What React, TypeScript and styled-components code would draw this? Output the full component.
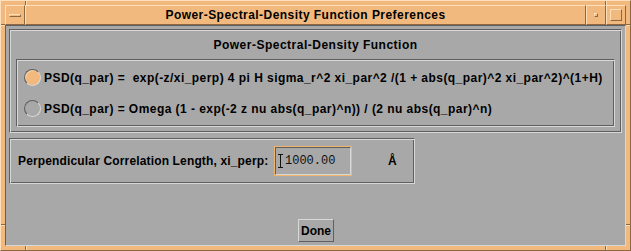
import React from "react";
import styled, { createGlobalStyle } from "styled-components";

const ORANGE = "#f2b97f";
const ORANGE_LIGHT = "#fde0bb";
const ORANGE_DARK = "#8c673f";
const GRAY = "#a8a8a8";
const GRAY_LIGHT = "#d8d8d8";
const GRAY_DARK = "#5f5f5f";
const FOCUS = "#f0b46c";

const Global = createGlobalStyle`
  html, body { margin: 0; padding: 0; background: ${GRAY}; }
  body { font-family: "Liberation Sans", Arial, sans-serif; }
`;

const Window = styled.div`
  position: relative;
  box-sizing: border-box;
  width: 631px;
  height: 251px;
  background: ${ORANGE};
  border: 1px solid;
  border-color: ${ORANGE_LIGHT} ${ORANGE_DARK} ${ORANGE_DARK} ${ORANGE_LIGHT};
  padding: 4px;
  display: flex;
  flex-direction: column;
`;

const Tick = styled.div<{ $v?: boolean }>`
  position: absolute;
  ${(p) =>
    p.$v
      ? `width: 2px; height: 4px; border-left: 1px solid ${ORANGE_DARK}; background: ${ORANGE_LIGHT}; box-sizing: border-box;`
      : `height: 2px; width: 4px; border-top: 1px solid ${ORANGE_DARK}; background: ${ORANGE_LIGHT}; box-sizing: border-box;`}
`;

const TitleBar = styled.div`
  display: flex;
  height: 20px;
  flex: none;
`;

const TitleButton = styled.div<{ $w?: number }>`
  box-sizing: border-box;
  width: ${(p) => (p.$w ? `${p.$w}px` : "auto")};
  flex: ${(p) => (p.$w ? "none" : "1")};
  height: 20px;
  border: 1px solid;
  border-color: ${ORANGE_LIGHT} ${ORANGE_DARK} ${ORANGE_DARK} ${ORANGE_LIGHT};
  display: flex;
  align-items: center;
  justify-content: center;
`;

const Title = styled.span`
  font: bold 12px "Liberation Sans", Arial, sans-serif;
  letter-spacing: 0.45px;
  color: #000;
  line-height: 18px;
  white-space: pre;
`;

const Knob = styled.div<{ $w: number; $h: number }>`
  box-sizing: border-box;
  width: ${(p) => p.$w}px;
  height: ${(p) => p.$h}px;
  border: 1px solid;
  border-color: ${ORANGE_LIGHT} ${ORANGE_DARK} ${ORANGE_DARK} ${ORANGE_LIGHT};
`;

const Content = styled.div`
  flex: 1;
  box-sizing: border-box;
  background: ${GRAY};
  border: 1px solid;
  border-color: ${GRAY_DARK} ${GRAY_LIGHT} ${GRAY_LIGHT} ${GRAY_DARK};
  padding: 3px 2px 3px 3px;
  display: flex;
  flex-direction: column;
  align-items: flex-start;
`;

const Etched = styled.div`
  box-sizing: border-box;
  border: 1px solid;
  border-color: ${GRAY_DARK} ${GRAY_LIGHT} ${GRAY_LIGHT} ${GRAY_DARK};
  box-shadow: inset 1px 1px 0 ${GRAY_LIGHT}, inset -1px -1px 0 ${GRAY_DARK};
`;

const Group = styled(Etched)`
  align-self: stretch;
  margin-right: 1px;
  padding: 8px 6px 5px 6px;
  display: flex;
  flex-direction: column;
`;

const GroupTitle = styled.div`
  font: bold 12px "Liberation Sans", Arial, sans-serif;
  letter-spacing: 0.5px;
  line-height: 14px;
  text-align: center;
  color: #000;
  margin-bottom: 7px;
`;

const RadioFrame = styled(Etched)`
  height: 68px;
  padding: 2px 7px 0 7px;
  display: flex;
  flex-direction: column;
`;

const RadioRow = styled.div`
  height: 31px;
  display: flex;
  align-items: center;
  gap: 3px;
`;

const RadioDot = styled.div<{ $on?: boolean }>`
  box-sizing: border-box;
  width: 17px;
  height: 17px;
  border-radius: 50%;
  flex: none;
  border: 1px solid;
  border-color: ${GRAY_DARK} ${GRAY_LIGHT} ${GRAY_LIGHT} ${GRAY_DARK};
  background: ${(p) => (p.$on ? ORANGE : GRAY)};
  box-shadow: ${(p) => (p.$on ? `inset 1px 1px 0 #f8d2a8` : "none")};
`;

const Formula = styled.span`
  font: bold 12px "Liberation Sans", Arial, sans-serif;
  letter-spacing: 0.45px;
  color: #000;
  white-space: pre;
`;

const FieldBox = styled(Etched)`
  margin-top: 5px;
  width: 406px;
  height: 46px;
  padding: 0 8px;
  display: flex;
  align-items: center;
`;

const FieldLabel = styled.span`
  font: bold 12px "Liberation Sans", Arial, sans-serif;
  letter-spacing: 0.15px;
  color: #000;
  white-space: pre;
  width: 256px;
  flex: none;
`;

const Input = styled.div`
  box-sizing: border-box;
  width: 78px;
  height: 30px;
  border: 1px solid ${FOCUS};
  flex: none;
`;

const InputWell = styled.div`
  box-sizing: border-box;
  height: 100%;
  border: 1px solid;
  border-color: ${GRAY_DARK} ${GRAY_LIGHT} ${GRAY_LIGHT} ${GRAY_DARK};
  display: flex;
  align-items: center;
  padding-left: 2px;
  gap: 2px;
`;

const Value = styled.span`
  font: 12px "Liberation Mono", "Courier New", monospace;
  color: #111;
  white-space: pre;
`;

const Unit = styled.span`
  font: bold 12px "Liberation Sans", Arial, sans-serif;
  color: #000;
  margin-left: 36px;
`;

const Footer = styled.div`
  align-self: stretch;
  margin-top: auto;
  display: flex;
  justify-content: center;
`;

const Button = styled.button`
  box-sizing: border-box;
  width: 36px;
  height: 23px;
  padding: 0;
  background: ${GRAY};
  border: 1px solid;
  border-color: ${GRAY_LIGHT} ${GRAY_DARK} ${GRAY_DARK} ${GRAY_LIGHT};
  font: bold 12px "Liberation Sans", Arial, sans-serif;
  color: #000;
`;

const IBeam = () => (
  <svg width="5" height="14" viewBox="0 0 5 14" style={{ flex: "none" }}>
    <path d="M0 0.5H5M2.5 0.5V13.5M0 13.5H5" stroke="#111" strokeWidth="1" fill="none" />
  </svg>
);

export default function App() {
  return (
    <>
      <Global />
      <Window>
        <Tick $v style={{ left: 24, top: 0 }} />
        <Tick $v style={{ left: 604, top: 0 }} />
        <Tick $v style={{ left: 24, bottom: 0 }} />
        <Tick $v style={{ left: 604, bottom: 0 }} />
        <Tick style={{ left: 0, top: 23 }} />
        <Tick style={{ right: 0, top: 23 }} />
        <Tick style={{ left: 0, top: 223 }} />
        <Tick style={{ right: 0, top: 223 }} />
        <TitleBar>
          <TitleButton $w={20}>
            <Knob $w={12} $h={3} />
          </TitleButton>
          <TitleButton>
            <Title>Power-Spectral-Density Function Preferences</Title>
          </TitleButton>
          <TitleButton $w={20}>
            <Knob $w={4} $h={4} />
          </TitleButton>
          <TitleButton $w={20}>
            <Knob $w={12} $h={12} />
          </TitleButton>
        </TitleBar>
        <Content>
          <Group>
            <GroupTitle>Power-Spectral-Density Function</GroupTitle>
            <RadioFrame>
              <RadioRow>
                <RadioDot $on />
                <Formula>{"PSD(q_par) =  exp(-z/xi_perp) 4 pi H sigma_r^2 xi_par^2 /(1 + abs(q_par)^2 xi_par^2)^(1+H)"}</Formula>
              </RadioRow>
              <RadioRow>
                <RadioDot />
                <Formula>{"PSD(q_par) = Omega (1 - exp(-2 z nu abs(q_par)^n)) / (2 nu abs(q_par)^n)"}</Formula>
              </RadioRow>
            </RadioFrame>
          </Group>
          <FieldBox>
            <FieldLabel>Perpendicular Correlation Length, xi_perp:</FieldLabel>
            <Input>
              <InputWell>
                <IBeam />
                <Value>1000.00</Value>
              </InputWell>
            </Input>
            <Unit>Å</Unit>
          </FieldBox>
          <Footer>
            <Button>Done</Button>
          </Footer>
        </Content>
      </Window>
    </>
  );
}
